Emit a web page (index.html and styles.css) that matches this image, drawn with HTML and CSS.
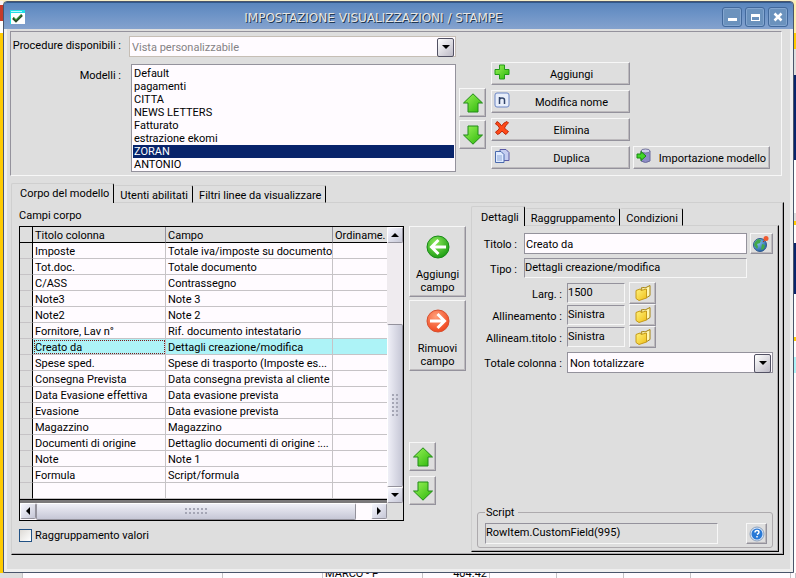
FILE: index.html
```html
<!DOCTYPE html>
<html lang="it">
<head>
<meta charset="utf-8">
<title>Impostazione visualizzazioni / stampe</title>
<link rel="stylesheet" href="styles.css">
</head>
<body>
<svg class="defs" aria-hidden="true">
  <defs>
    <linearGradient id="green" x1="0" y1="0" x2="1" y2="1"><stop offset="0" stop-color="#9cf35a"/><stop offset="1" stop-color="#29b608"/></linearGradient>
    <radialGradient id="ballGreen" cx=".4" cy=".3" r=".75"><stop offset="0" stop-color="#8be85a"/><stop offset="1" stop-color="#189a10"/></radialGradient>
    <radialGradient id="ballRed" cx=".4" cy=".3" r=".75"><stop offset="0" stop-color="#ffa07a"/><stop offset="1" stop-color="#ef4118"/></radialGradient>
    <linearGradient id="gold" x1="0" y1="0" x2="1" y2="1"><stop offset="0" stop-color="#fff37b"/><stop offset="1" stop-color="#efbe18"/></linearGradient>
    <radialGradient id="sea" cx=".35" cy=".3" r=".8"><stop offset="0" stop-color="#8cc8f0"/><stop offset="1" stop-color="#1858a0"/></radialGradient>
    <symbol id="up" viewBox="0 0 22 20"><path d="M11 .8 20.500 10H16v9H6v-9H1.500z" fill="url(#green)" stroke="#218a18"/></symbol>
    <symbol id="down" viewBox="0 0 22 20"><path d="M11 19.200 20.500 10H16V1H6v9H1.500z" fill="url(#green)" stroke="#218a18"/></symbol>
    <symbol id="folder" viewBox="0 0 18 18"><path d="M7 4 10 3.500l1 .5 5-2.500v10L12 14z" fill="#fff7b5" stroke="#a5820c"/><path d="M2 6.500 6 5l1 1.500L12.500 5v9L5 16.500l-3-2z" fill="url(#gold)" stroke="#c69a18"/></symbol>
  </defs>
</svg>

<div class="screen">
  <div class="behind-left"></div>

  <main class="dialog">
    <header class="titlebar">
      <svg class="app-icon" viewBox="0 0 15 14"><path fill="#fff" d="M0 0h15v14H0z"/><path fill="#21dfe7" d="M0 0h15v3H0zM0 3h1v11H0z"/><path fill="#b5f7ff" d="M1 1h11v1H1z"/><path d="M3 8l3 3 6-6" fill="none" stroke="#294a29" stroke-width="2.500"/><path d="M3.500 7.500l2.500 2.500 5.500-5" fill="none" stroke="#31a631"/></svg>
      <h1>IMPOSTAZIONE VISUALIZZAZIONI / STAMPE</h1>
      <div class="window-buttons">
        <button aria-label="Riduci"><svg viewBox="0 0 18 18"><path fill="#fff" d="M5 10h9v3H5z"/></svg></button>
        <button aria-label="Ingrandisci"><svg viewBox="0 0 18 18"><path fill="#fff" fill-rule="evenodd" d="M5 6h9v7H5zM6 9v3h7V9z"/></svg></button>
        <button aria-label="Chiudi"><svg viewBox="0 0 18 18"><path d="M5.500 5.500l7 7m0-7l-7 7" stroke="#fff" stroke-width="2.500"/></svg></button>
      </div>
    </header>

    <div class="content">
      <section class="models">
        <label class="caption" for="procedure">Procedure disponibili :</label>
        <div class="combo disabled procedure"><select id="procedure" disabled><option>Vista personalizzabile</option></select></div>
        <label class="caption models-caption" for="modelli">Modelli :</label>
        <select class="listbox" id="modelli" size="8">
          <option>Default</option><option>pagamenti</option><option>CITTA</option><option>NEWS LETTERS</option><option>Fatturato</option><option>estrazione ekomi</option><option selected>ZORAN</option><option>ANTONIO</option>
        </select>
        <div class="order">
          <button class="raised arrow" aria-label="Sposta su"><svg><use href="#up"/></svg></button>
          <button class="raised arrow" aria-label="Sposta giù"><svg><use href="#down"/></svg></button>
        </div>
        <div class="commands">
          <button class="raised command"><svg viewBox="0 0 16 16"><path d="M5.500 1h5v4.500H15v5h-4.500V15h-5v-4.500H1v-5h4.500z" fill="url(#green)" stroke="#219a18"/></svg><span>Aggiungi</span></button>
          <button class="raised command"><svg viewBox="0 0 16 16"><rect x="1" y="1" width="14" height="14" rx="2" fill="#e8eefa" stroke="#6b86c6"/><path d="M5.500 12V5m0 3q0-2 2.500-2t2.500 2v4" fill="none" stroke="#31456b" stroke-width="1.500"/></svg><span>Modifica nome</span></button>
          <button class="raised command"><svg viewBox="0 0 16 16"><path d="M3 1.500Q6 3 7.500 6 9.500 2.500 13 1.500L14.500 3Q11.500 5 10.500 8q2 2.500 4 3.500L12 14.500Q9.500 13 8 11q-2 3-4.500 3.500L1.500 12Q4.500 10.500 5.500 8 4 5 1.500 4z" fill="#ff4a18" stroke="#bd2808"/></svg><span>Elimina</span></button>
          <button class="raised command"><svg viewBox="0 0 16 16"><path d="M6 1.500h6l3 3v8H6z" fill="#c5cef0" stroke="#5a5aa5"/><path d="M1.500 3.500H7l3 3v8H1.500z" fill="#e0ebff" stroke="#4a6aad"/><path d="M3 8h5M3 10h5M3 12h5" stroke="#8ca6d6"/></svg><span>Duplica</span></button>
          <button class="raised command import"><svg viewBox="0 0 16 16"><path d="M5 3v10q4.500 3 9 0V3z" fill="#8c8cc6" stroke="#6b6b9c"/><ellipse cx="9.500" cy="3" rx="4.500" ry="2" fill="#d0d0ea" stroke="#73739c"/><path d="M1 6h4V3.500L10 8l-5 4.500V10H1z" fill="#42d629" stroke="#188a10"/></svg><span>Importazione modello</span></button>
        </div>
      </section>

      <div class="tabs" role="tablist">
        <button class="tab active" role="tab" aria-selected="true">Corpo del modello</button>
        <button class="tab" role="tab">Utenti abilitati</button>
        <button class="tab" role="tab">Filtri linee da visualizzare</button>
      </div>
      <section class="page body-page">
        <div class="fields">
          <h2>Campi corpo</h2>
          <div class="grid">
            <table>
              <colgroup><col class="c-mark"><col class="c-title"><col class="c-field"><col class="c-order"></colgroup>
              <thead><tr><th></th><th>Titolo colonna</th><th>Campo</th><th>Ordiname.</th></tr></thead>
              <tbody>
                <tr><th></th><td>Imposte</td><td>Totale iva/imposte su documento</td><td></td></tr>
                <tr><th></th><td>Tot.doc.</td><td>Totale documento</td><td></td></tr>
                <tr><th></th><td>C/ASS</td><td>Contrassegno</td><td></td></tr>
                <tr><th></th><td>Note3</td><td>Note 3</td><td></td></tr>
                <tr><th></th><td>Note2</td><td>Note 2</td><td></td></tr>
                <tr><th></th><td>Fornitore, Lav n°</td><td>Rif. documento intestatario</td><td></td></tr>
                <tr class="current"><th></th><td>Creato da</td><td>Dettagli creazione/modifica</td><td></td></tr>
                <tr><th></th><td>Spese sped.</td><td>Spese di trasporto (Imposte es...</td><td></td></tr>
                <tr><th></th><td>Consegna Prevista</td><td>Data consegna prevista al cliente</td><td></td></tr>
                <tr><th></th><td>Data Evasione effettiva</td><td>Data evasione prevista</td><td></td></tr>
                <tr><th></th><td>Evasione</td><td>Data evasione prevista</td><td></td></tr>
                <tr><th></th><td>Magazzino</td><td>Magazzino</td><td></td></tr>
                <tr><th></th><td>Documenti di origine</td><td>Dettaglio documenti di origine :...</td><td></td></tr>
                <tr><th></th><td>Note</td><td>Note 1</td><td></td></tr>
                <tr><th></th><td>Formula</td><td>Script/formula</td><td></td></tr>
                <tr><th></th><td></td><td></td><td></td></tr>
              </tbody>
            </table>
            <div class="vscroll">
              <button aria-label="Scorri su"><svg viewBox="0 0 8 4"><path d="M4 0l4 4H0z"/></svg></button>
              <div class="vthumb"><i class="grip"></i></div>
              <button aria-label="Scorri giù"><svg viewBox="0 0 8 4"><path d="M4 4l4-4H0z"/></svg></button>
            </div>
            <div class="hscroll">
              <button aria-label="Scorri a sinistra"><svg viewBox="0 0 4 8"><path d="M0 4l4-4v8z"/></svg></button>
              <div class="hthumb"><i class="grip"></i></div>
              <button aria-label="Scorri a destra"><svg viewBox="0 0 4 8"><path d="M4 4L0 0v8z"/></svg></button>
            </div>
          </div>
          <label class="check"><input type="checkbox">Raggruppamento valori</label>
        </div>

        <div class="transfer">
          <button class="raised big"><svg viewBox="0 0 24 24"><circle cx="12" cy="12" r="11" fill="url(#ballGreen)" stroke="#188a18"/><path d="M12.500 5L5.500 12l7 7M6 12h14" fill="none" stroke="#fff" stroke-width="3"/></svg><span>Aggiungi campo</span></button>
          <button class="raised big"><svg viewBox="0 0 24 24"><circle cx="12" cy="12" r="11" fill="url(#ballRed)" stroke="#d65131"/><path d="M11.500 5l7 7-7 7M18 12H4" fill="none" stroke="#fff" stroke-width="3"/></svg><span>Rimuovi campo</span></button>
          <div class="order">
            <button class="raised arrow" aria-label="Campo su"><svg><use href="#up"/></svg></button>
            <button class="raised arrow" aria-label="Campo giù"><svg><use href="#down"/></svg></button>
          </div>
        </div>

        <div class="details">
          <div class="tabs" role="tablist">
            <button class="tab active" role="tab" aria-selected="true">Dettagli</button>
            <button class="tab" role="tab">Raggruppamento</button>
            <button class="tab" role="tab">Condizioni</button>
          </div>
          <div class="page details-page">
            <div class="row wide">
              <label for="titolo">Titolo :</label>
              <input class="edit" id="titolo" value="Creato da">
              <button class="raised square" aria-label="Traduzioni"><svg viewBox="0 0 18 18"><circle cx="8" cy="10" r="6.500" fill="url(#sea)" stroke="#31598c"/><path d="M3 7l3-3 3 1-1 3-3 1 1 3-1 2-3-4zM10 9l3 1-1 4-3 1z" fill="#42a84a"/><path d="M11 7l3-3" stroke="#a53118"/><circle cx="14" cy="3.500" r="2.500" fill="#ef5a31"/></svg></button>
            </div>
            <div class="row wide">
              <label for="tipo">Tipo :</label>
              <input class="sunken" id="tipo" readonly value="Dettagli creazione/modifica">
            </div>
            <div class="stack">
              <div class="row narrow"><label for="larg">Larg. :</label><input class="sunken" id="larg" readonly value="1500"><button class="raised folder" aria-label="Scegli larghezza"><svg><use href="#folder"/></svg></button></div>
              <div class="row narrow"><label for="allin">Allineamento :</label><input class="sunken" id="allin" readonly value="Sinistra"><button class="raised folder" aria-label="Scegli allineamento"><svg><use href="#folder"/></svg></button></div>
              <div class="row narrow"><label for="allint">Allineam.titolo :</label><input class="sunken" id="allint" readonly value="Sinistra"><button class="raised folder" aria-label="Scegli allineamento titolo"><svg><use href="#folder"/></svg></button></div>
            </div>
            <div class="row narrow">
              <label for="totale">Totale colonna :</label>
              <div class="combo"><select id="totale"><option>Non totalizzare</option></select></div>
            </div>
            <fieldset>
              <legend>Script</legend>
              <input class="sunken" aria-label="Script" readonly value="RowItem.CustomField(995)">
              <button class="raised help" aria-label="Aiuto"><svg viewBox="0 0 16 16"><circle cx="8" cy="8" r="7" fill="#d6e3f7" stroke="#8ca2bd"/><circle cx="8" cy="8" r="5.500" fill="#2979d6"/><path d="M6 6.500q0-2 2-2t2 1.700q0 1-2 2.300m0 1.500v1.500" fill="none" stroke="#fff" stroke-width="1.500"/></svg></button>
            </fieldset>
          </div>
        </div>
      </section>
    </div>
  </main>

  <div class="behind-right"></div>
</div>
<div class="behind-bottom"><span></span><span></span><span></span><span>MARCO - P</span><span class="number">404.42</span><span></span><span></span><span></span><span></span><span></span></div>
</body>
</html>
```

FILE: styles.css
```css
:root {
  --face: #dedede;
  --paper: #fffbff;
  --light: #f7f7f7;
  --shade: #94929c;
  --line: #c6c3c6;
  --ui: Roboto, "Liberation Sans", sans-serif;
}

* { box-sizing: border-box; }

body {
  margin: 0;
  min-height: 100vh;
  display: flex;
  flex-direction: column;
  background: var(--paper);
  color: #000;
  font: 11px/13px var(--ui);
}

button, input, select {
  font: inherit;
  color: inherit;
  margin: 0;
  padding: 0;
  border: 0;
  border-radius: 0;
  background: none;
}

svg { display: block; flex: none; }
.defs { position: absolute; width: 0; height: 0; }

/* Application seen behind the dialog */
.screen { flex: 1; display: flex; padding-top: 1px; background: #f7efc6; }
.behind-left { width: 3px; background: linear-gradient(#f7f3f7 4px, #c63a29 4px 20px, #fff 20px 32px, #ffcb00 32px); }
.behind-right { width: 2px; background: linear-gradient(#ffefad 32px, #ffcb00 32px 48px, #dedede 48px 74px, #08246b 74px 159px, #fff 159px 212px, #dedede 212px 220px, #ffcb00 220px 224px, #fff 224px 242px, #08246b 242px 293px, #fff 293px 336px, #ffcb00 336px 340px, #fff 340px 356px, #adf3f7 356px 372px, #fff 372px); }
.behind-bottom {
  height: 5px;
  display: grid;
  grid-template-columns: 23px 200px 100px 100px 67px 67px 67px 67px 100px 1fr;
  overflow: hidden;
}
.behind-bottom span {
  display: flex;
  align-items: flex-end;
  height: 5px;
  padding: 0 2px;
  border-right: 1px solid var(--line);
  line-height: 9px;
  white-space: nowrap;
}
.behind-bottom .number { justify-content: flex-end; }
.behind-bottom span:first-child { background: var(--face); }

/* Window frame */
.dialog {
  flex: 1;
  min-width: 0;
  display: flex;
  flex-direction: column;
  border: 1px solid #4a556b;
  border-radius: 4px 4px 0 0;
  background: var(--face);
  box-shadow: inset 0 0 0 3px #efefef;
}
.titlebar {
  display: flex;
  align-items: center;
  height: 27px;
  padding: 2px 5px 0 6px;
  border-top: 1px solid #31598c;
  border-radius: 3px 3px 0 0;
  background: linear-gradient(#5a86bd, #6b92c6 40%, #84a2ce);
}
.app-icon { width: 15px; height: 14px; }
.titlebar h1 {
  flex: 1;
  margin: 0;
  padding-top: 2px;
  text-align: center;
  font: 12px/16px "DejaVu Sans", sans-serif;
  color: #e7e7e7;
  text-shadow: 1px 1px 0 #213852, 1px 0 0 #8c9aad;
}
.window-buttons { display: flex; gap: 3px; }
.window-buttons button {
  width: 20px;
  height: 20px;
  border: 1px solid #42699c;
  border-radius: 3px;
  background: #6b92bd;
  box-shadow: inset 0 0 0 1px #84a6d0;
}

.content { flex: 1; display: flex; flex-direction: column; padding: 2px 9px 17px 6px; }

/* Raised buttons */
.raised {
  border: 1px solid;
  border-color: var(--light) var(--shade) var(--shade) var(--light);
  box-shadow: inset -1px -1px 0 #bdbabd;
  background: var(--face);
}
.order { display: flex; flex-direction: column; gap: 3px; }
.arrow { width: 27px; height: 29px; padding: 0 2px; }
.arrow svg { width: 22px; height: 20px; }

/* Top group */
.models {
  display: grid;
  grid-template-columns: 118px minmax(200px, 327px) 33px 1fr;
  grid-template-rows: 21px 108px;
  row-gap: 7px;
  margin-right: 2px;
  padding: 4px 10px 3px 0;
  border: 1px solid;
  border-color: var(--shade) var(--light) var(--light) var(--shade);
}
.caption { grid-column: 1; text-align: right; padding: 3px 8px 0 0; }
.models-caption { padding-top: 5px; }
.procedure { grid-column: 2; }
.listbox {
  grid-column: 2;
  margin-left: 2px;
  padding: 2px 1px;
  border: 1px solid var(--shade);
  background: var(--paper);
  overflow: hidden;
  outline: 0;
}
.listbox option { min-height: 13px; height: 13px; line-height: 13px; padding: 0 1px; }
.listbox option:checked { background: #08246b linear-gradient(#08246b, #08246b); color: #fff; }
.models .order { grid-column: 3; padding: 24px 0 0 3px; }
.commands {
  display: grid;
  grid-template-columns: 139px 137px;
  grid-auto-rows: 23px;
  gap: 5px 3px;
  margin: -2px 0 0 2px;
}
.command { grid-column: 1; display: flex; padding: 1px 2px; }
.command svg { width: 16px; height: 16px; }
.command span { flex: 1; padding-left: 6px; line-height: 21px; }
.command.import { grid-column: 2; }

/* Combo boxes */
.combo { position: relative; height: 21px; border: 1px solid #94929c; background: var(--paper); }
.combo.disabled { border-color: #c6beb5; color: #848284; }
.combo select { appearance: none; width: 100%; height: 19px; padding: 2px 20px 0 2px; opacity: 1; }
.combo::before, .combo::after { content: ""; position: absolute; pointer-events: none; }
.combo::before {
  top: 1px;
  right: 1px;
  width: 15px;
  height: 17px;
  border: 1px solid #525163;
  border-radius: 2px;
  background: linear-gradient(135deg, #fff, #bdbac6);
}
.combo::after { top: 8px; right: 5px; border: 4px solid transparent; border-top-color: #000; border-bottom: 0; }

/* Tabs */
.tabs { display: flex; align-items: flex-end; position: relative; margin-bottom: -1px; }
.tab {
  height: 18px;
  padding: 2px 4px 0 5px;
  border: 1px solid;
  border-color: #cfcfcf #000 transparent transparent;
  border-radius: 2px 2px 0 0;
  white-space: nowrap;
}
.tab.active { height: 20px; padding: 0 4px 0 8px; border-left-color: #cfcfcf; border-bottom: 0; background: var(--face); }
.content > .tabs { margin-top: 7px; margin-left: 1px; }
.page {
  border: 1px solid;
  border-color: #cfcfcf #000 #000 #cfcfcf;
  box-shadow: inset -1px -1px 0 #adaaad;
}
.body-page { flex: 1; display: flex; margin-left: 1px; padding: 3px 4px 2px 7px; }

/* Column grid */
.fields { flex: 385 1 0; min-width: 0; }
.fields h2 { margin: 3px 0 4px; font: inherit; }
.grid {
  display: grid;
  grid-template-columns: minmax(0, 1fr) 16px;
  grid-template-rows: auto 20px;
  border: 1px solid #000;
}
table { width: 100%; table-layout: fixed; border-collapse: separate; border-spacing: 0; border-bottom: 1px solid #000; background: var(--paper); }
.c-mark { width: 13px; }
.c-title { width: 133px; }
.c-order { width: 54px; }
th, td {
  height: 16px;
  padding: 2px 0 0 2px;
  border-right: 1px solid var(--line);
  border-bottom: 1px solid var(--line);
  font-weight: normal;
  line-height: 13px;
  text-align: left;
  white-space: nowrap;
  overflow: hidden;
}
th { background: var(--face); }
thead th { border-bottom-color: #000; border-right-color: var(--shade); }
th:first-child { border-right-color: #000; }
tr > :last-child { border-right: 0; }
.current td { background: #adf3f7; }
.current td:nth-child(2) { outline: 1px dotted #7b1818; outline-offset: -2px; }

.vscroll { grid-row: 1 / 3; grid-column: 2; display: flex; flex-direction: column; background: #efebef; margin-bottom: 17px; }
.hscroll { grid-column: 1; display: flex; background: var(--paper); border-top: 3px solid #7b797b; }
.grid button, .vthumb, .hthumb {
  display: flex;
  align-items: center;
  justify-content: center;
  border: 1px solid;
  border-color: #fff #94929c #94929c #fff;
  border-radius: 2px;
  background: linear-gradient(135deg, #f7f7ff, #c6c7d6);
}
.grid button { flex: none; width: 16px; height: 16px; }
.vscroll svg { width: 8px; height: 4px; }
.hscroll svg { width: 4px; height: 8px; }
.vthumb { flex: 1; margin-top: 81px; border-top-color: #94929c; background: linear-gradient(90deg, #efeff7, #c6c7d6); }
.hthumb { flex: 1; margin-right: 15px; border-left-color: #94929c; background: linear-gradient(#efeff7, #c6c7d6); }
.grip { width: 7px; height: 23px; background: radial-gradient(circle at 1px 1px, #a5a6b5 1px, transparent 1px) 0 0 / 4px 4px; }
.hthumb .grip { width: 23px; height: 7px; }

.check { display: flex; align-items: center; gap: 3px; margin-top: 8px; }
.check input { appearance: none; width: 13px; height: 13px; border: 1px solid #215184; background: linear-gradient(135deg, #dedbd6, #fff); }

/* Transfer column */
.transfer { flex: none; width: 57px; margin: 20px 5px 0; display: flex; flex-direction: column; gap: 3px; }
.big { height: 71px; padding: 8px 2px 0; display: flex; flex-direction: column; align-items: center; justify-content: flex-start; gap: 9px; }
.big svg { width: 24px; height: 24px; }
.transfer .order { gap: 5px; margin-top: 68px; }

/* Details */
.details { flex: 308 1 0; min-width: 0; display: flex; flex-direction: column; }
.details .tabs { z-index: 1; }
.details .tab { padding: 2px 4px 0 5px; }
.details .tab.active { padding: 1px 5px 0 9px; }
.details-page { flex: 1; display: flex; flex-direction: column; padding: 7px 5px 3px 5px; }
.row { display: grid; align-items: center; }
.row label { text-align: right; padding-top: 2px; }
.row.wide { grid-template-columns: 44px minmax(0, 1fr) 23px; column-gap: 3px; margin-bottom: 4px; }
.row.wide label { padding-right: 4px; }
.row.narrow { grid-template-columns: 90px 58px 27px 1fr; }
.row.narrow label { padding-right: 5px; }
.row.narrow .folder { margin-left: 4px; width: 27px; }
.row.narrow .combo { grid-column: 2 / 5; }
.stack { margin-bottom: 4px; }
.edit { height: 21px; padding: 1px 1px 0; border: 1px solid var(--shade); background: var(--paper); }
.sunken {
  min-width: 0;
  height: 20px;
  padding: 0 0 1px 0;
  border: 1px solid;
  border-color: var(--shade) var(--light) var(--light) var(--shade);
}
.square { width: 23px; height: 21px; padding: 0 1px; }
.square svg, .folder svg { width: 18px; height: 18px; }
.folder { height: 22px; padding: 0 4px; }
fieldset {
  display: flex;
  justify-content: space-between;
  margin: auto 0 0;
  min-width: 0;
  padding: 4px 5px 3px 7px;
  border: 1px solid #adaaad;
  border-radius: 3px;
}
legend { padding: 0 4px 0 1px; }
fieldset .sunken { flex: 0 1 233px; height: 21px; padding-bottom: 3px; }
.help { width: 21px; height: 21px; padding: 0 2px; }
.help svg { width: 16px; height: 16px; }
```
